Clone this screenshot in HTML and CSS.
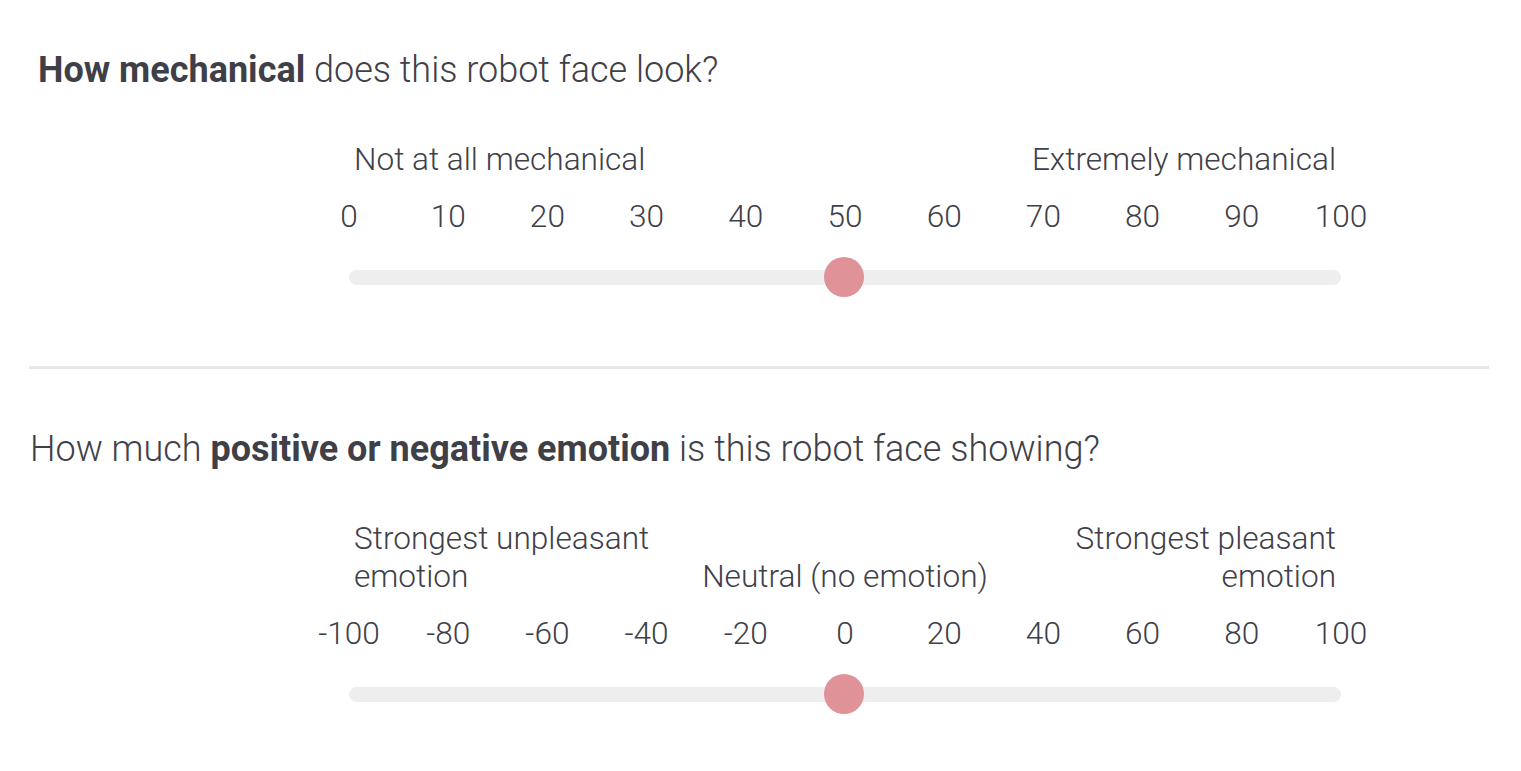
FILE: index.html
```html
<!DOCTYPE html>
<html lang="en">
<head>
<meta charset="utf-8">
<title>Robot face survey</title>
<link rel="stylesheet" href="styles.css">
</head>
<body>
<main class="survey">
  <section class="question">
    <h2 class="question-text indent"><strong>How mechanical</strong> does this robot face look?</h2>
    <div class="slider">
      <div class="anchors">
        <span class="anchor anchor-left">Not at all mechanical</span>
        <span class="anchor anchor-mid"></span>
        <span class="anchor anchor-right">Extremely mechanical</span>
      </div>
      <div class="ticks">
        <span>0</span><span>10</span><span>20</span><span>30</span><span>40</span><span>50</span><span>60</span><span>70</span><span>80</span><span>90</span><span>100</span>
      </div>
      <div class="track-wrap">
        <div class="track"></div>
        <div class="thumb" style="left:50%"></div>
      </div>
    </div>
  </section>

  <hr class="divider">

  <section class="question">
    <h2 class="question-text">How much <strong>positive or negative emotion</strong> is this robot face showing?</h2>
    <div class="slider">
      <div class="anchors">
        <span class="anchor anchor-left">Strongest unpleasant emotion</span>
        <span class="anchor anchor-mid">Neutral (no emotion)</span>
        <span class="anchor anchor-right">Strongest pleasant emotion</span>
      </div>
      <div class="ticks">
        <span>-100</span><span>-80</span><span>-60</span><span>-40</span><span>-20</span><span>0</span><span>20</span><span>40</span><span>60</span><span>80</span><span>100</span>
      </div>
      <div class="track-wrap">
        <div class="track"></div>
        <div class="thumb" style="left:50%"></div>
      </div>
    </div>
  </section>
</main>
</body>
</html>
```

FILE: styles.css
```css
* { box-sizing: border-box; }

html, body {
  margin: 0;
  padding: 0;
  background: #ffffff;
}

body {
  font-family: Roboto, "Liberation Sans", sans-serif;
  font-weight: 300;
  color: #404049;
}

.survey {
  width: 1460px;
  margin-left: 29px;
  padding-top: 50px;
}

.question-text {
  margin: 0;
  font-size: 36px;
  font-weight: 300;
  line-height: 40px;
  padding-left: 1px;
}

.question-text.indent {
  padding-left: 9px;
}

.question-text strong {
  font-weight: 700;
  color: #3f3f48;
}

.slider {
  margin-left: 320px;
  width: 992px;
  margin-top: 51px;
}

.anchors {
  display: grid;
  grid-template-columns: 1fr 1fr 1fr;
  padding: 0 5px;
  font-size: 31.6px;
  line-height: 38px;
  align-items: end;
}

.anchor-left { text-align: left; }
.anchor-mid { text-align: center; }
.anchor-right { text-align: right; }

.ticks {
  display: grid;
  grid-template-columns: repeat(11, 1fr);
  width: calc(992px + 99.2px);
  margin-left: -49.6px;
  margin-top: 19px;
  font-size: 31.6px;
  line-height: 38px;
  text-align: center;
}

.track-wrap {
  position: relative;
  height: 40px;
  margin-top: 21px;
  display: flex;
  align-items: center;
}

.track {
  width: 100%;
  height: 15px;
  border-radius: 8px;
  background: #eeeeee;
}

.thumb {
  position: absolute;
  top: 0;
  width: 40px;
  height: 40px;
  margin-left: -21px;
  border-radius: 50%;
  background: #e09299;
}

.divider {
  border: 0;
  height: 3px;
  background: #e7e7e9;
  margin: 69px 0 60px 0;
}
```
